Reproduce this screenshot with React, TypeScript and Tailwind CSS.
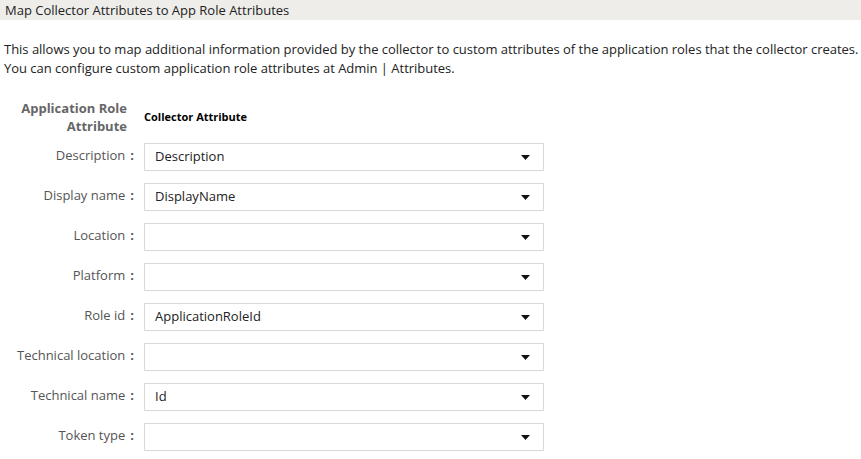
import React from 'react';

const rows: { label: string; value: string }[] = [
    { label: 'Description', value: 'Description' },
    { label: 'Display name', value: 'DisplayName' },
    { label: 'Location', value: '' },
    { label: 'Platform', value: '' },
    { label: 'Role id', value: 'ApplicationRoleId' },
    { label: 'Technical location', value: '' },
    { label: 'Technical name', value: 'Id' },
    { label: 'Token type', value: '' },
];

const Caret: React.FC = () => (
    <svg width="9" height="5" viewBox="0 0 9 5" className="shrink-0">
        <path d="M0 0h9L4.5 5z" fill="#111" />
    </svg>
);

const App: React.FC = () => {
    return (
        <div className="w-[861px] h-[459px] bg-white font-['Open_Sans',sans-serif] text-[13px] text-[#222] overflow-hidden">
            <div className="h-[20px] bg-[#eeedea] pl-[5px] leading-[20px] text-[13px] text-[#222]">
                Map Collector Attributes to App Role Attributes
            </div>

            <div className="pl-[4px] pt-[20px] leading-[19px] whitespace-nowrap tracking-[-0.02px]">
                <p>This allows you to map additional information provided by the collector to custom attributes of the application roles that the collector creates.</p>
                <p>You can configure custom application role attributes at Admin | Attributes.</p>
            </div>

            <div className="mt-[21px] flex">
                <div className="w-[144px] text-right pr-[17px] font-bold text-[#666] text-[13px] leading-[18px]">
                    Application Role<br />Attribute
                </div>
                <div className="flex items-center font-bold text-[11px] text-black">
                    Collector Attribute
                </div>
            </div>

            <div className="mt-[8px] grid grid-cols-[144px_400px] gap-y-[12px]">
                {rows.map((row) => (
                    <React.Fragment key={row.label}>
                        <div className="flex justify-end items-center pr-[10px] text-[#555] pb-[2px]">
                            <span>{row.label}</span>
                            <span className="ml-[5px] font-bold text-[#555]">:</span>
                        </div>
                        <div className="h-[28px] border border-[#d9d9d9] flex items-center justify-between pl-[10px] pr-[13px] text-[13px] text-[#222] bg-white">
                            <span>{row.value}</span>
                            <Caret />
                        </div>
                    </React.Fragment>
                ))}
            </div>
        </div>
    );
};

export default App;
